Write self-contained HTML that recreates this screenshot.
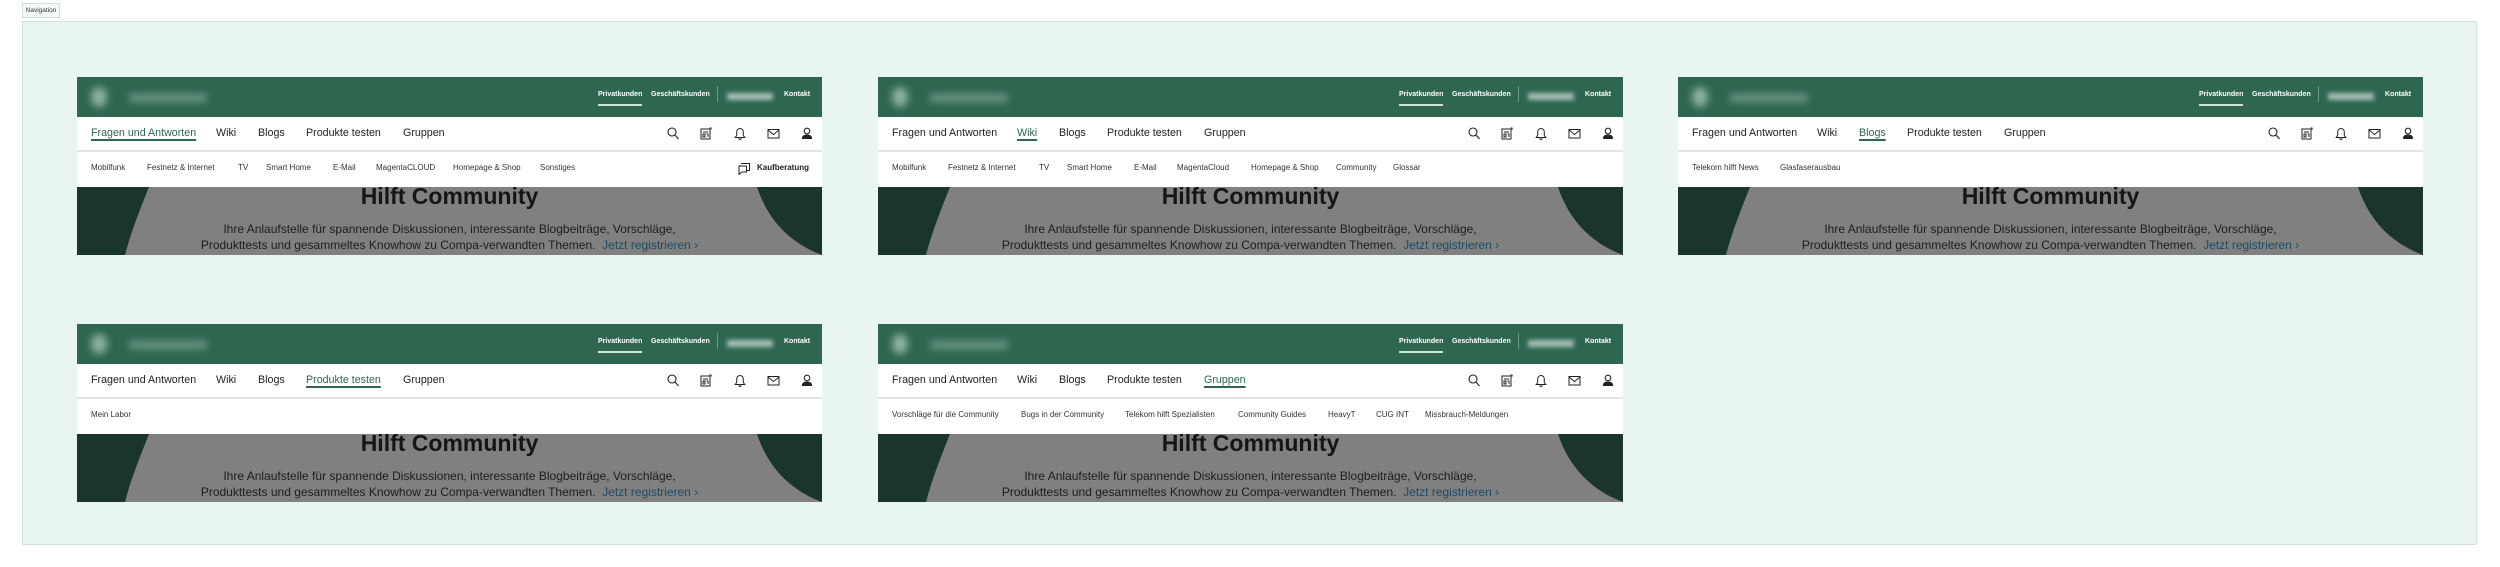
<!DOCTYPE html>
<html><head><meta charset="utf-8"><style>
*{box-sizing:border-box;margin:0;padding:0}
body{width:2500px;height:567px;background:#fff;position:relative;overflow:hidden;font-family:"Liberation Sans",Arial,sans-serif;color:#222}
.lbl{position:absolute;left:22px;top:3px;width:38px;height:15px;border:1px solid #cfe0d8;background:#f4faf7;font-size:6.5px;line-height:13px;text-align:center;color:#333}
.frame{position:absolute;left:22px;top:21px;width:2455px;height:524px;background:#e8f5f0;border:1px solid #cfe2da}
.p{position:absolute;width:745px;height:178px;overflow:hidden;background:#fff}
.top{position:absolute;left:0;top:0;width:745px;height:40px;background:#2e6650}
.logo1{position:absolute;left:14px;top:10px;width:16px;height:20px;border-radius:50%;background:#8fb4a3;filter:blur(4px)}
.logo2{position:absolute;left:52px;top:17px;width:78px;height:8px;background:#6e9886;filter:blur(4px)}
.tl{position:absolute;top:14px;font-size:7px;font-weight:bold;color:#fff;white-space:nowrap}
.tl.u:after{content:"";position:absolute;left:0;right:0;top:13px;height:1.5px;background:#cfe3da}
.sep{position:absolute;left:640px;top:9px;width:1px;height:16px;background:#6f9a88}
.blur{position:absolute;left:650px;top:16px;width:46px;height:7px;background:#a8c2b7;filter:blur(2.5px)}
.nav{position:absolute;left:0;top:40px;width:745px;height:35px;border-bottom:2px solid #e4e4e4}
.ni{position:absolute;top:10px;font-size:10.7px;color:#222;white-space:nowrap}
.ni.a{color:#2e6650;text-decoration:underline;text-underline-offset:3px;text-decoration-thickness:1.5px}
.ic{position:absolute;top:10px}
.sub{position:absolute;left:0;top:75px;width:745px;height:35px}
.si{position:absolute;top:11px;font-size:8px;color:#333;white-space:nowrap}
.hero{position:absolute;left:0;top:110px;width:745px;height:68px;background:#808080;overflow:hidden}
.h1{position:absolute;left:0;width:745px;top:-4px;text-align:center;font-size:23px;font-weight:bold;color:#151515}
.pp{position:absolute;left:0;width:745px;top:34px;text-align:center;font-size:12px;line-height:16px;color:#1c1c1c}
.lk{color:#1c4b66}
</style></head><body>
<div class="lbl">Navigation</div>
<div class="frame"></div>

<div class="p" style="left:77px;top:77px">
<div class="top"><div class="logo1"></div><div class="logo2"></div><div class="tl u" style="left:521px">Privatkunden</div><div class="tl" style="left:574px">Geschäftskunden</div><div class="sep"></div><div class="blur"></div><div class="tl" style="left:707px">Kontakt</div></div>
<div class="nav"><span class="ni a" style="left:14px">Fragen und Antworten</span><span class="ni" style="left:139px">Wiki</span><span class="ni" style="left:181px">Blogs</span><span class="ni" style="left:229px">Produkte testen</span><span class="ni" style="left:326px">Gruppen</span>
<svg class="ic" style="left:590px" width="12" height="13" viewBox="0 0 12 13" fill="none" stroke="#222" stroke-width="1.1"><circle cx="5" cy="5" r="4"/><path d="M8 8l3.5 4"/></svg>
<svg class="ic" style="left:623px" width="12" height="13" viewBox="0 0 12 13" fill="none" stroke="#222" stroke-width="1"><rect x="1" y="2" width="9" height="10"/><path d="M3 5h5M3 7h2v3H3zM6.5 7h1.5v3"/><circle cx="10.5" cy="1.5" r="1.3" fill="#2e6650" stroke="none"/></svg>
<svg class="ic" style="left:657px" width="12" height="13" viewBox="0 0 12 13" fill="none" stroke="#222" stroke-width="1"><path d="M6 1.5c-2.2 0-3.3 1.7-3.3 3.7v3.3L1.2 10.5h9.6L9.3 8.5V5.2C9.3 3.2 8.2 1.5 6 1.5zM4.6 11.3c.3.8.8 1.2 1.4 1.2s1.1-.4 1.4-1.2"/></svg>
<svg class="ic" style="left:690px" width="13" height="13" viewBox="0 0 13 13" fill="none" stroke="#222" stroke-width="1"><rect x="1" y="2.5" width="11" height="8.5"/><path d="M1 3l5.5 4.5L12 3"/></svg>
<svg class="ic" style="left:724px" width="12" height="13" viewBox="0 0 12 13" fill="none" stroke="#222" stroke-width="1.1"><circle cx="6" cy="4" r="2.8"/><path d="M1.5 11.5c0-2.5 2-3.5 4.5-3.5s4.5 1 4.5 3.5z" fill="#222"/></svg>
</div>
<div class="sub"><span class="si" style="left:14px">Mobilfunk</span><span class="si" style="left:70px">Festnetz &amp; Internet</span><span class="si" style="left:161px">TV</span><span class="si" style="left:189px">Smart Home</span><span class="si" style="left:256px">E-Mail</span><span class="si" style="left:299px">MagentaCLOUD</span><span class="si" style="left:376px">Homepage &amp; Shop</span><span class="si" style="left:463px">Sonstiges</span>
<svg style="position:absolute;left:660px;top:10px" width="14" height="13" viewBox="0 0 14 13" fill="none" stroke="#222" stroke-width="1"><path d="M4 1.5h8.5v7H10"/><path d="M1.5 4h8v6H5l-3 2.5V4z"/></svg><span class="si" style="left:680px;font-weight:bold;color:#222">Kaufberatung</span></div>
<div class="hero"><svg style="position:absolute;left:0;top:0" width="745" height="68"><path d="M0 0H72C62 25 54 45 48 68H0z" fill="#1a3529"/><path d="M745 0H680C690 30 710 55 745 68z" fill="#1a3529"/></svg><div class="h1">Hilft Community</div><div class="pp">Ihre Anlaufstelle für spannende Diskussionen, interessante Blogbeiträge, Vorschläge,<br>Produkttests und gesammeltes Knowhow zu Compa-verwandten Themen. &nbsp;<span class="lk">Jetzt registrieren ›</span></div></div>
</div>

<div class="p" style="left:878px;top:77px">
<div class="top"><div class="logo1"></div><div class="logo2"></div><div class="tl u" style="left:521px">Privatkunden</div><div class="tl" style="left:574px">Geschäftskunden</div><div class="sep"></div><div class="blur"></div><div class="tl" style="left:707px">Kontakt</div></div>
<div class="nav"><span class="ni" style="left:14px">Fragen und Antworten</span><span class="ni a" style="left:139px">Wiki</span><span class="ni" style="left:181px">Blogs</span><span class="ni" style="left:229px">Produkte testen</span><span class="ni" style="left:326px">Gruppen</span>
<svg class="ic" style="left:590px" width="12" height="13" viewBox="0 0 12 13" fill="none" stroke="#222" stroke-width="1.1"><circle cx="5" cy="5" r="4"/><path d="M8 8l3.5 4"/></svg>
<svg class="ic" style="left:623px" width="12" height="13" viewBox="0 0 12 13" fill="none" stroke="#222" stroke-width="1"><rect x="1" y="2" width="9" height="10"/><path d="M3 5h5M3 7h2v3H3zM6.5 7h1.5v3"/><circle cx="10.5" cy="1.5" r="1.3" fill="#2e6650" stroke="none"/></svg>
<svg class="ic" style="left:657px" width="12" height="13" viewBox="0 0 12 13" fill="none" stroke="#222" stroke-width="1"><path d="M6 1.5c-2.2 0-3.3 1.7-3.3 3.7v3.3L1.2 10.5h9.6L9.3 8.5V5.2C9.3 3.2 8.2 1.5 6 1.5zM4.6 11.3c.3.8.8 1.2 1.4 1.2s1.1-.4 1.4-1.2"/></svg>
<svg class="ic" style="left:690px" width="13" height="13" viewBox="0 0 13 13" fill="none" stroke="#222" stroke-width="1"><rect x="1" y="2.5" width="11" height="8.5"/><path d="M1 3l5.5 4.5L12 3"/></svg>
<svg class="ic" style="left:724px" width="12" height="13" viewBox="0 0 12 13" fill="none" stroke="#222" stroke-width="1.1"><circle cx="6" cy="4" r="2.8"/><path d="M1.5 11.5c0-2.5 2-3.5 4.5-3.5s4.5 1 4.5 3.5z" fill="#222"/></svg>
</div>
<div class="sub"><span class="si" style="left:14px">Mobilfunk</span><span class="si" style="left:70px">Festnetz &amp; Internet</span><span class="si" style="left:161px">TV</span><span class="si" style="left:189px">Smart Home</span><span class="si" style="left:256px">E-Mail</span><span class="si" style="left:299px">MagentaCloud</span><span class="si" style="left:373px">Homepage &amp; Shop</span><span class="si" style="left:458px">Community</span><span class="si" style="left:515px">Glossar</span></div>
<div class="hero"><svg style="position:absolute;left:0;top:0" width="745" height="68"><path d="M0 0H72C62 25 54 45 48 68H0z" fill="#1a3529"/><path d="M745 0H680C690 30 710 55 745 68z" fill="#1a3529"/></svg><div class="h1">Hilft Community</div><div class="pp">Ihre Anlaufstelle für spannende Diskussionen, interessante Blogbeiträge, Vorschläge,<br>Produkttests und gesammeltes Knowhow zu Compa-verwandten Themen. &nbsp;<span class="lk">Jetzt registrieren ›</span></div></div>
</div>

<div class="p" style="left:1678px;top:77px">
<div class="top"><div class="logo1"></div><div class="logo2"></div><div class="tl u" style="left:521px">Privatkunden</div><div class="tl" style="left:574px">Geschäftskunden</div><div class="sep"></div><div class="blur"></div><div class="tl" style="left:707px">Kontakt</div></div>
<div class="nav"><span class="ni" style="left:14px">Fragen und Antworten</span><span class="ni" style="left:139px">Wiki</span><span class="ni a" style="left:181px">Blogs</span><span class="ni" style="left:229px">Produkte testen</span><span class="ni" style="left:326px">Gruppen</span>
<svg class="ic" style="left:590px" width="12" height="13" viewBox="0 0 12 13" fill="none" stroke="#222" stroke-width="1.1"><circle cx="5" cy="5" r="4"/><path d="M8 8l3.5 4"/></svg>
<svg class="ic" style="left:623px" width="12" height="13" viewBox="0 0 12 13" fill="none" stroke="#222" stroke-width="1"><rect x="1" y="2" width="9" height="10"/><path d="M3 5h5M3 7h2v3H3zM6.5 7h1.5v3"/><circle cx="10.5" cy="1.5" r="1.3" fill="#2e6650" stroke="none"/></svg>
<svg class="ic" style="left:657px" width="12" height="13" viewBox="0 0 12 13" fill="none" stroke="#222" stroke-width="1"><path d="M6 1.5c-2.2 0-3.3 1.7-3.3 3.7v3.3L1.2 10.5h9.6L9.3 8.5V5.2C9.3 3.2 8.2 1.5 6 1.5zM4.6 11.3c.3.8.8 1.2 1.4 1.2s1.1-.4 1.4-1.2"/></svg>
<svg class="ic" style="left:690px" width="13" height="13" viewBox="0 0 13 13" fill="none" stroke="#222" stroke-width="1"><rect x="1" y="2.5" width="11" height="8.5"/><path d="M1 3l5.5 4.5L12 3"/></svg>
<svg class="ic" style="left:724px" width="12" height="13" viewBox="0 0 12 13" fill="none" stroke="#222" stroke-width="1.1"><circle cx="6" cy="4" r="2.8"/><path d="M1.5 11.5c0-2.5 2-3.5 4.5-3.5s4.5 1 4.5 3.5z" fill="#222"/></svg>
</div>
<div class="sub"><span class="si" style="left:14px">Telekom hilft News</span><span class="si" style="left:102px">Glasfaserausbau</span></div>
<div class="hero"><svg style="position:absolute;left:0;top:0" width="745" height="68"><path d="M0 0H72C62 25 54 45 48 68H0z" fill="#1a3529"/><path d="M745 0H680C690 30 710 55 745 68z" fill="#1a3529"/></svg><div class="h1">Hilft Community</div><div class="pp">Ihre Anlaufstelle für spannende Diskussionen, interessante Blogbeiträge, Vorschläge,<br>Produkttests und gesammeltes Knowhow zu Compa-verwandten Themen. &nbsp;<span class="lk">Jetzt registrieren ›</span></div></div>
</div>

<div class="p" style="left:77px;top:324px">
<div class="top"><div class="logo1"></div><div class="logo2"></div><div class="tl u" style="left:521px">Privatkunden</div><div class="tl" style="left:574px">Geschäftskunden</div><div class="sep"></div><div class="blur"></div><div class="tl" style="left:707px">Kontakt</div></div>
<div class="nav"><span class="ni" style="left:14px">Fragen und Antworten</span><span class="ni" style="left:139px">Wiki</span><span class="ni" style="left:181px">Blogs</span><span class="ni a" style="left:229px">Produkte testen</span><span class="ni" style="left:326px">Gruppen</span>
<svg class="ic" style="left:590px" width="12" height="13" viewBox="0 0 12 13" fill="none" stroke="#222" stroke-width="1.1"><circle cx="5" cy="5" r="4"/><path d="M8 8l3.5 4"/></svg>
<svg class="ic" style="left:623px" width="12" height="13" viewBox="0 0 12 13" fill="none" stroke="#222" stroke-width="1"><rect x="1" y="2" width="9" height="10"/><path d="M3 5h5M3 7h2v3H3zM6.5 7h1.5v3"/><circle cx="10.5" cy="1.5" r="1.3" fill="#2e6650" stroke="none"/></svg>
<svg class="ic" style="left:657px" width="12" height="13" viewBox="0 0 12 13" fill="none" stroke="#222" stroke-width="1"><path d="M6 1.5c-2.2 0-3.3 1.7-3.3 3.7v3.3L1.2 10.5h9.6L9.3 8.5V5.2C9.3 3.2 8.2 1.5 6 1.5zM4.6 11.3c.3.8.8 1.2 1.4 1.2s1.1-.4 1.4-1.2"/></svg>
<svg class="ic" style="left:690px" width="13" height="13" viewBox="0 0 13 13" fill="none" stroke="#222" stroke-width="1"><rect x="1" y="2.5" width="11" height="8.5"/><path d="M1 3l5.5 4.5L12 3"/></svg>
<svg class="ic" style="left:724px" width="12" height="13" viewBox="0 0 12 13" fill="none" stroke="#222" stroke-width="1.1"><circle cx="6" cy="4" r="2.8"/><path d="M1.5 11.5c0-2.5 2-3.5 4.5-3.5s4.5 1 4.5 3.5z" fill="#222"/></svg>
</div>
<div class="sub"><span class="si" style="left:14px">Mein Labor</span></div>
<div class="hero"><svg style="position:absolute;left:0;top:0" width="745" height="68"><path d="M0 0H72C62 25 54 45 48 68H0z" fill="#1a3529"/><path d="M745 0H680C690 30 710 55 745 68z" fill="#1a3529"/></svg><div class="h1">Hilft Community</div><div class="pp">Ihre Anlaufstelle für spannende Diskussionen, interessante Blogbeiträge, Vorschläge,<br>Produkttests und gesammeltes Knowhow zu Compa-verwandten Themen. &nbsp;<span class="lk">Jetzt registrieren ›</span></div></div>
</div>

<div class="p" style="left:878px;top:324px">
<div class="top"><div class="logo1"></div><div class="logo2"></div><div class="tl u" style="left:521px">Privatkunden</div><div class="tl" style="left:574px">Geschäftskunden</div><div class="sep"></div><div class="blur"></div><div class="tl" style="left:707px">Kontakt</div></div>
<div class="nav"><span class="ni" style="left:14px">Fragen und Antworten</span><span class="ni" style="left:139px">Wiki</span><span class="ni" style="left:181px">Blogs</span><span class="ni" style="left:229px">Produkte testen</span><span class="ni a" style="left:326px">Gruppen</span>
<svg class="ic" style="left:590px" width="12" height="13" viewBox="0 0 12 13" fill="none" stroke="#222" stroke-width="1.1"><circle cx="5" cy="5" r="4"/><path d="M8 8l3.5 4"/></svg>
<svg class="ic" style="left:623px" width="12" height="13" viewBox="0 0 12 13" fill="none" stroke="#222" stroke-width="1"><rect x="1" y="2" width="9" height="10"/><path d="M3 5h5M3 7h2v3H3zM6.5 7h1.5v3"/><circle cx="10.5" cy="1.5" r="1.3" fill="#2e6650" stroke="none"/></svg>
<svg class="ic" style="left:657px" width="12" height="13" viewBox="0 0 12 13" fill="none" stroke="#222" stroke-width="1"><path d="M6 1.5c-2.2 0-3.3 1.7-3.3 3.7v3.3L1.2 10.5h9.6L9.3 8.5V5.2C9.3 3.2 8.2 1.5 6 1.5zM4.6 11.3c.3.8.8 1.2 1.4 1.2s1.1-.4 1.4-1.2"/></svg>
<svg class="ic" style="left:690px" width="13" height="13" viewBox="0 0 13 13" fill="none" stroke="#222" stroke-width="1"><rect x="1" y="2.5" width="11" height="8.5"/><path d="M1 3l5.5 4.5L12 3"/></svg>
<svg class="ic" style="left:724px" width="12" height="13" viewBox="0 0 12 13" fill="none" stroke="#222" stroke-width="1.1"><circle cx="6" cy="4" r="2.8"/><path d="M1.5 11.5c0-2.5 2-3.5 4.5-3.5s4.5 1 4.5 3.5z" fill="#222"/></svg>
</div>
<div class="sub"><span class="si" style="left:14px">Vorschläge für die Community</span><span class="si" style="left:143px">Bugs in der Community</span><span class="si" style="left:247px">Telekom hilft Spezialisten</span><span class="si" style="left:360px">Community Guides</span><span class="si" style="left:450px">HeavyT</span><span class="si" style="left:498px">CUG INT</span><span class="si" style="left:547px">Missbrauch-Meldungen</span></div>
<div class="hero"><svg style="position:absolute;left:0;top:0" width="745" height="68"><path d="M0 0H72C62 25 54 45 48 68H0z" fill="#1a3529"/><path d="M745 0H680C690 30 710 55 745 68z" fill="#1a3529"/></svg><div class="h1">Hilft Community</div><div class="pp">Ihre Anlaufstelle für spannende Diskussionen, interessante Blogbeiträge, Vorschläge,<br>Produkttests und gesammeltes Knowhow zu Compa-verwandten Themen. &nbsp;<span class="lk">Jetzt registrieren ›</span></div></div>
</div>
</body></html>
